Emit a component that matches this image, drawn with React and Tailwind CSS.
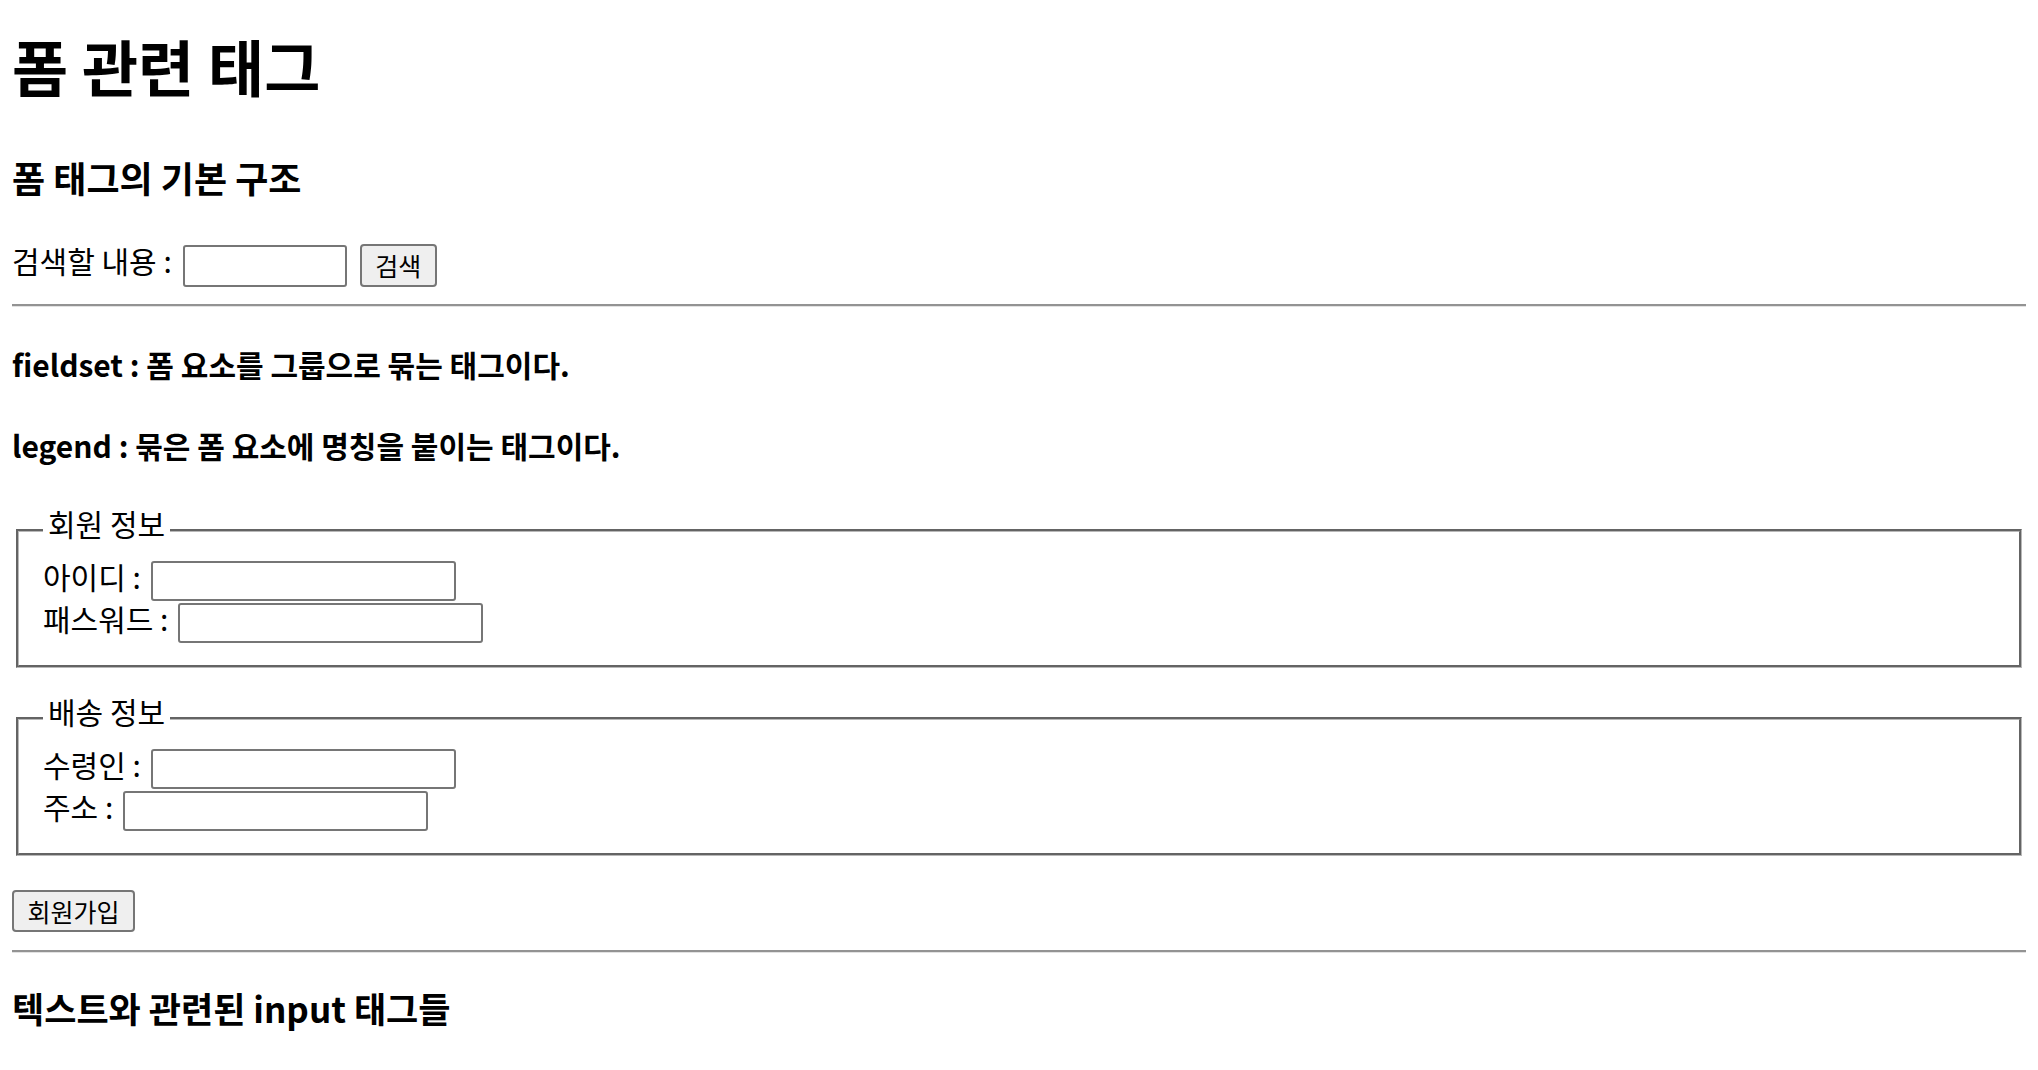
import React from "react";

// Plain form demo page, browser-default look at ~1.5x zoom

const Rule = ({ className = "" }) => (
  <hr className={`h-[3px] border-0 border-t-2 border-b border-t-[#939393] border-b-[#e2e2e2] ${className}`} />
);

const Field = ({ label }) => (
  <div className="flex h-[42px] items-center">
    <span className="pb-[11px] text-[30px] leading-[36px]">{label}</span>
    <input
      type="text"
      className="ml-[10px] h-[40px] w-[305px] rounded-[3px] border-2 border-[#767676] bg-white px-[3px] text-[24px] outline-none"
    />
  </div>
);

const Group = ({ title, fields, className = "" }) => (
  <fieldset
    className={`mx-[4px] border-[3px] border-[#b8b8b8] [border-style:groove] px-[24px] pt-[6px] pb-[21px] ${className}`}
  >
    <legend className="px-[5px] pb-[14px] text-[30px] leading-[34px]">{title}</legend>
    {fields.map((f) => (
      <Field key={f} label={f} />
    ))}
  </fieldset>
);

export default function App() {
  return (
    <div className="min-h-screen bg-white px-[12px] pt-[34px] text-black font-['Noto_Sans_CJK_KR','Noto_Sans',sans-serif]">
      <h1 className="text-[61px] font-bold leading-[64px]">폼 관련 태그</h1>

      <h3 className="mt-[59px] text-[36px] font-bold leading-[40px]">폼 태그의 기본 구조</h3>

      <form className="mt-[47px] flex h-[43px] items-center" onSubmit={(e) => e.preventDefault()}>
        <label className="pb-[11px] text-[30px] leading-[36px]">검색할 내용 :</label>
        <input
          type="text"
          className="ml-[11px] h-[42px] w-[164px] rounded-[3px] border-2 border-[#767676] bg-white px-[3px] text-[24px] outline-none"
        />
        <button
          type="submit"
          className="ml-[13px] h-[43px] w-[77px] rounded-[4px] border-2 border-[#767676] bg-[#efefef] text-[25px] leading-none"
        >
          검색
        </button>
      </form>

      <Rule className="mt-[17px]" />

      <h4 className="mt-[36px] text-[30px] font-bold leading-[42px]">fieldset : 폼 요소를 그룹으로 묶는 태그이다.</h4>
      <h4 className="mt-[39px] text-[30px] font-bold leading-[42px]">legend : 묶은 폼 요소에 명칭을 붙이는 태그이다.</h4>

      <form onSubmit={(e) => e.preventDefault()}>
        <Group className="mt-[40px]" title="회원 정보" fields={["아이디 :", "패스워드 :"]} />
        <Group className="mt-[26px]" title="배송 정보" fields={["수령인 :", "주소 :"]} />

        <button
          type="submit"
          className="mt-[34px] h-[42px] w-[123px] rounded-[4px] border-2 border-[#767676] bg-[#efefef] text-[25px] leading-none"
        >
          회원가입
        </button>
      </form>

      <Rule className="mt-[18px]" />

      <h3 className="mt-[35px] text-[35px] font-bold leading-[40px]">텍스트와 관련된 input 태그들</h3>
    </div>
  );
}
